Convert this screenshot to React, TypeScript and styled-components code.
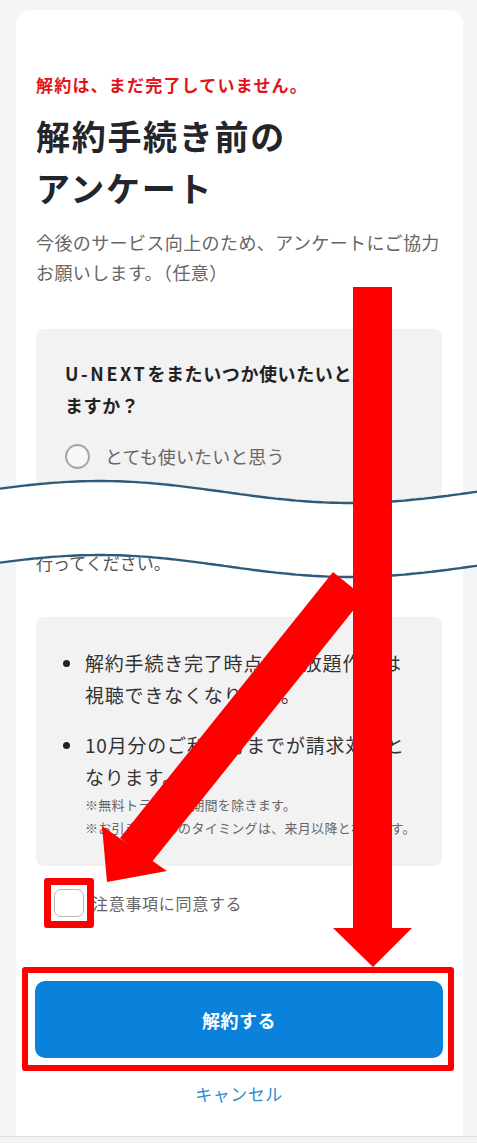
import React from "react";
import styled, { createGlobalStyle } from "styled-components";

const GlobalStyle = createGlobalStyle`
  * { box-sizing: border-box; }
  html, body {
    margin: 0;
    padding: 0;
    background: #f4f5f7;
  }
  body {
    font-family: "Noto Sans CJK JP", "Noto Sans", sans-serif;
  }
`;

const Page = styled.div`
  position: relative;
  width: 477px;
  height: 1143px;
  padding: 10px 14px 0 16px;
  overflow: hidden;
  display: flex;
  flex-direction: column;
`;

const Card = styled.main`
  width: 447px;
  background: #ffffff;
  border-radius: 14px 14px 0 0;
  padding: 62px 21px 29px 20px;
`;

const BottomBar = styled.div`
  flex: 1;
  margin: 0 -14px 0 -16px;
  border-top: 1px solid #dedfe2;
  background: #f2f3f5;
`;

const RedNotice = styled.p`
  margin: 0;
  font-size: 17px;
  line-height: 26px;
  font-weight: 700;
  color: #e5121b;
  letter-spacing: 1.2px;
`;

const Title = styled.h1`
  margin: 12px 0 0;
  font-size: 34px;
  line-height: 52px;
  font-weight: 700;
  color: #22262b;
  letter-spacing: 1.7px;
`;

const Lead = styled.p`
  margin: 13px 0 0;
  font-size: 18px;
  line-height: 30px;
  color: #666666;
  letter-spacing: 0.4px;
  white-space: nowrap;
`;

const GrayBox = styled.section<{ $top: number; $pad: string }>`
  margin-top: ${(p) => p.$top}px;
  background: #f2f2f2;
  border-radius: 8px;
  padding: ${(p) => p.$pad};
`;

const Question = styled.h2`
  margin: 0;
  font-size: 18px;
  line-height: 32px;
  font-weight: 700;
  color: #222222;
  letter-spacing: 0.6px;
  white-space: nowrap;
`;

const Brand = styled.span`
  letter-spacing: 2.6px;
`;

const RadioRow = styled.label`
  margin-top: 19px;
  height: 32px;
  display: flex;
  align-items: center;
  gap: 15px;
`;

const RadioCircle = styled.span`
  width: 25px;
  height: 25px;
  border-radius: 50%;
  border: 2px solid #a6a6a6;
  background: #f7f7f7;
`;

const RadioLabel = styled.span`
  font-size: 18px;
  color: #666666;
  letter-spacing: 0.1px;
`;

const Continued = styled.p`
  margin: 38px 0 0;
  font-size: 17px;
  line-height: 26px;
  color: #555555;
`;

const NoticeList = styled.ul`
  margin: 0;
  padding: 0;
  list-style: none;
`;

const NoticeItem = styled.li`
  position: relative;
  padding-left: 20px;
  font-size: 19px;
  line-height: 32px;
  color: #333333;
  letter-spacing: 0.8px;
  white-space: nowrap;

  & + & {
    margin-top: 18px;
  }

  &::before {
    content: "";
    position: absolute;
    left: -2px;
    top: 13px;
    width: 7px;
    height: 7px;
    border-radius: 50%;
    background: #222222;
  }
`;

const Note = styled.span`
  display: block;
  font-size: 13px;
  line-height: 23px;
  color: #666666;
  letter-spacing: 0.3px;
`;

const AgreeRow = styled.label`
  margin-top: 12px;
  padding-left: 8px;
  display: flex;
  align-items: center;
`;

const CheckFrame = styled.span`
  width: 50px;
  height: 50px;
  border: 7px solid #ff0000;
  border-radius: 3px;
  background: #ffffff;
  display: flex;
  align-items: center;
  justify-content: center;
  position: relative;
  z-index: 1;
`;

const CheckBox = styled.span`
  width: 30px;
  height: 28px;
  border: 1.5px solid #b8b8b8;
  border-radius: 7px;
  background: #ffffff;
`;

const AgreeLabel = styled.span`
  margin-left: -2px;
  font-size: 16px;
  color: #666666;
  letter-spacing: 0.7px;
`;

const ButtonFrame = styled.div`
  margin: 39px -12px 0 -14px;
  border: 6px solid #ff0000;
  border-radius: 3px;
  padding: 8px 5px 7px 7px;
`;

const PrimaryButton = styled.button`
  width: 100%;
  height: 77px;
  border: none;
  border-radius: 10px;
  background: #0a82dc;
  color: #ffffff;
  font-family: inherit;
  font-size: 18px;
  font-weight: 700;
  letter-spacing: 0.5px;
`;

const CancelLink = styled.a`
  display: block;
  margin-top: 10px;
  text-align: center;
  font-size: 17px;
  line-height: 26px;
  color: #2a8bd2;
  letter-spacing: 0.5px;
  text-decoration: none;
`;

const Overlay = styled.svg`
  position: absolute;
  left: 0;
  top: 0;
  pointer-events: none;
`;

// the torn "cut" between the two screenshot parts
const waveY = (x: number, base: number) =>
  base - 11 * Math.cos((2 * Math.PI * (x - 100)) / 500);

const wavePoints = (base: number) => {
  const pts: string[] = [];
  for (let x = 0; x <= 480; x += 4) pts.push(`${x},${waveY(x, base).toFixed(1)}`);
  return pts;
};

const WaveCut: React.FC = () => {
  const top = wavePoints(492);
  const bottom = wavePoints(566);
  const band = `M${top.join(" L")} L${[...bottom].reverse().join(" L")} Z`;
  return (
    <Overlay width={477} height={1143} viewBox="0 0 477 1143">
      <path d={band} fill="#ffffff" />
      <path d={`M${top.join(" L")}`} fill="none" stroke="#2e5a7b" strokeWidth={2.4} />
      <path d={`M${bottom.join(" L")}`} fill="none" stroke="#2e5a7b" strokeWidth={2.4} />
    </Overlay>
  );
};

const Arrows: React.FC = () => (
  <Overlay width={477} height={1143} viewBox="0 0 477 1143">
    <polygon points="333,572 364,597 151,863 120,838" fill="#ff0000" />
    <polygon points="102,826 167,871 107,882" fill="#ff0000" />
    <polygon
      points="353,287 392,287 392,928 412,928 373,967 333,928 353,928"
      fill="#ff0000"
    />
  </Overlay>
);

const App: React.FC = () => {
  return (
    <>
      <GlobalStyle />
      <Page>
        <Card>
          <RedNotice>解約は、まだ完了していません。</RedNotice>
          <Title>
            解約手続き前の
            <br />
            アンケート
          </Title>
          <Lead>
            今後のサービス向上のため、アンケートにご協力
            <br />
            お願いします。（任意）
          </Lead>

          <GrayBox $top={42} $pad="28px 20px 40px 29px">
            <Question>
              <Brand>U-NEXT</Brand>をまたいつか使いたいと思い
              <br />
              ますか？
            </Question>
            <RadioRow>
              <RadioCircle />
              <RadioLabel>とても使いたいと思う</RadioLabel>
            </RadioRow>
          </GrayBox>

          <Continued>行ってください。</Continued>

          <GrayBox $top={41} $pad="30px 20px 27px 29px">
            <NoticeList>
              <NoticeItem>
                解約手続き完了時点で見放題作品は
                <br />
                視聴できなくなります。
              </NoticeItem>
              <NoticeItem>
                10月分のご利用分までが請求対象と
                <br />
                なります。
                <Note>※無料トライアル期間を除きます。</Note>
                <Note>※お引き落としのタイミングは、来月以降となります。</Note>
              </NoticeItem>
            </NoticeList>
          </GrayBox>

          <AgreeRow>
            <CheckFrame>
              <CheckBox />
            </CheckFrame>
            <AgreeLabel>注意事項に同意する</AgreeLabel>
          </AgreeRow>

          <ButtonFrame>
            <PrimaryButton>解約する</PrimaryButton>
          </ButtonFrame>

          <CancelLink href="#">キャンセル</CancelLink>
        </Card>
        <BottomBar />
        <WaveCut />
        <Arrows />
      </Page>
    </>
  );
};

export default App;
